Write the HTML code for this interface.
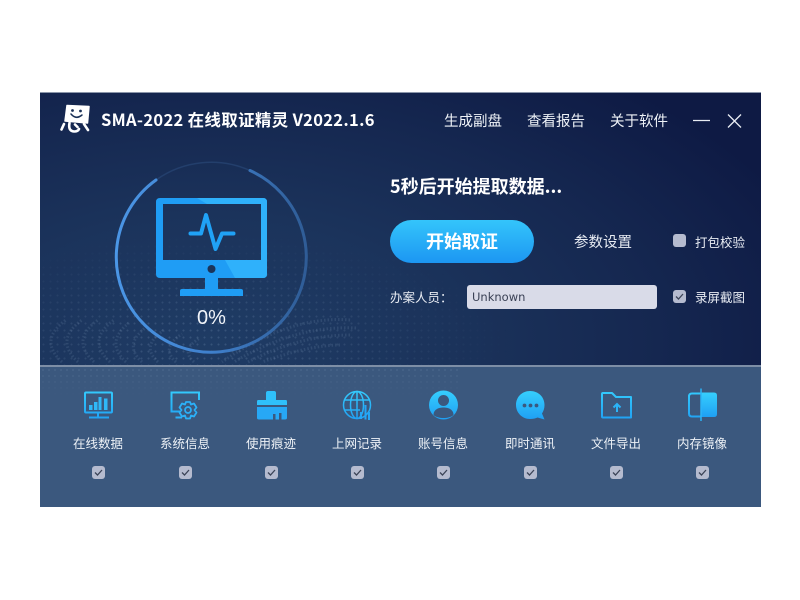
<!DOCTYPE html>
<html><head><meta charset="utf-8">
<style>
html,body{margin:0;padding:0;background:#fff;width:800px;height:600px;overflow:hidden}
body{font-family:"Noto Sans CJK SC","Liberation Sans",sans-serif;position:relative}
#win{position:absolute;left:40px;top:92px;width:721px;height:415px;overflow:hidden;border-top:0}
#line{position:absolute;left:0;top:0;width:721px;height:1px;background:#8b96aa}
#top{position:absolute;left:0;top:1px;width:721px;height:272px;background:radial-gradient(ellipse 640px 340px at 170px 250px,#1f3c65 0%,#1b335b 38%,#152750 70%,#0e1a44 100%)}
#dots{position:absolute;left:0;top:130px;width:480px;height:143px;background-image:radial-gradient(circle,rgba(150,175,205,.2) 0.8px,transparent 1.2px);background-size:7px 7px;-webkit-mask-image:radial-gradient(ellipse 300px 110px at 170px 120px,#000 20%,transparent 100%);mask-image:radial-gradient(ellipse 300px 110px at 170px 120px,#000 20%,transparent 100%)}
#sep{position:absolute;left:0;top:273px;width:721px;height:2px;background:#7d8ea6}
#bot{position:absolute;left:0;top:275px;width:721px;height:140px;background:#3b587e}
#botd{position:absolute;left:0;top:275px;width:420px;height:30px;background-image:radial-gradient(circle,rgba(150,175,205,.13) 0.9px,transparent 1.3px);background-size:6px 6px;-webkit-mask-image:linear-gradient(#000,transparent);mask-image:linear-gradient(#000,transparent)}
.t{position:absolute;white-space:nowrap;color:#fff;line-height:1}
.cb{position:absolute;width:13px;height:13px;border-radius:3px;background:#b5bbcf;box-sizing:border-box}
.cb svg{position:absolute;left:0;top:0}
.lab{position:absolute;width:80px;text-align:center;font-size:12.5px;color:#eef2f7;line-height:1;top:437px}
svg.abs{position:absolute}
#btn{position:absolute;left:390px;top:220px;width:144px;height:43px;border-radius:22px;background:linear-gradient(#34c5fb,#1c96f2);color:#fff;font-size:18px;font-weight:700;text-align:center;line-height:43px}
#inp{position:absolute;left:467px;top:285px;width:190px;height:24px;border-radius:3px;background:#d9dbe8;color:#3a4155;line-height:24px;padding-left:5px;box-sizing:border-box;font-family:"DejaVu Sans","Liberation Sans",sans-serif;font-size:11.5px}
</style></head><body>
<div id="win">
 <div id="line"></div><div id="top"></div><div id="dots"></div>
 <div id="sep"></div><div id="bot"></div><div id="botd"></div>
</div>

<svg class="abs" style="left:0;top:0" width="800" height="600" viewBox="0 0 800 600">
 <defs>
  <linearGradient id="ring" x1="115" y1="0" x2="307" y2="0" gradientUnits="userSpaceOnUse"><stop offset="0" stop-color="#4b96e6"/><stop offset=".5" stop-color="#3f80cc"/><stop offset="1" stop-color="#2f5c96"/></linearGradient>
  <linearGradient id="ic" x1="0" y1="0" x2="0" y2="1"><stop offset="0" stop-color="#36cffe"/><stop offset="1" stop-color="#1f9ff3"/></linearGradient>
  <linearGradient id="ics" gradientUnits="userSpaceOnUse" x1="0" y1="388" x2="0" y2="421"><stop offset="0" stop-color="#36cffe"/><stop offset="1" stop-color="#1f9ff3"/></linearGradient>
  <clipPath id="wv"><rect x="40" y="300" width="400" height="64"/></clipPath>
 </defs>
 <!-- wave bands -->
 <g clip-path="url(#wv)" fill="none" stroke="#8ba6c6" stroke-width="3" stroke-dasharray="1.500 2" opacity=".16">
  <path d="M62 362Q38 340 66 320"/><path d="M78 362Q54 340 82 320"/><path d="M94 362Q70 340 98 320"/><path d="M110 362Q86 340 114 320"/><path d="M126 362Q104 342 130 322"/><path d="M142 362Q122 344 148 326"/><path d="M158 362Q140 346 164 330"/><path d="M176 362Q160 348 182 334"/><path d="M194 362Q180 350 200 338"/>
  <path d="M340 345Q310 345 262 362"/><path d="M350 335Q300 335 248 362"/><path d="M356 328Q296 325 234 362"/><path d="M350 320Q290 315 222 362"/>
 </g>
 <!-- ring -->
 <path d="M250 170.500A95 95 0 0 0 156 180" fill="none" stroke="#233f6c" stroke-width="1.500"/>
 <path d="M156 180A95 95 0 1 0 250 170.500" fill="none" stroke="url(#ring)" stroke-width="3" stroke-linecap="round"/>
 <!-- monitor -->
 <path fill-rule="evenodd" d="M160 198H263Q267 198 267 202V274Q267 278 263 278H160Q156 278 156 274V202Q156 198 160 198ZM163 204V260H261V204Z" fill="#1f9df5"/>
 <path d="M197 198H263Q267 198 267 202V204H207Z" fill="#2fb1fb"/>
 <path d="M225 260H261V204H267V274Q267 278 263 278H235Z" fill="#2fb1fb"/>
 <circle cx="211.500" cy="269" r="4" fill="#1b3459"/>
 <path d="M205 278H218V290H205Z" fill="#1f9df5"/>
 <path d="M182 289H241Q243 289 243 291V296H180V291Q180 289 182 289Z" fill="#1f9df5"/>
 <path d="M190.500 233.500H201L206 215L215.500 249L222 233.500H233.500" fill="none" stroke="#20a2f6" stroke-width="4" stroke-linecap="round" stroke-linejoin="round"/>

 <!-- logo -->
 <path d="M67 105.500L89 106.500L87.500 123L65 121Z" fill="#fff" stroke="#fff" stroke-width="1.500" stroke-linejoin="round"/>
 <circle cx="72.500" cy="110.500" r="1.400" fill="#1a3157"/><circle cx="80.500" cy="111" r="1.400" fill="#1a3157"/>
 <path d="M71 114Q76 120 82 115" fill="none" stroke="#1a3157" stroke-width="1.500" stroke-linecap="round"/>
 <g fill="none" stroke="#fff" stroke-width="2.600" stroke-linecap="round">
  <path d="M64 124L61.500 129.500"/><path d="M69.500 123Q68 131 74 131.500Q78 131.500 79 129"/><path d="M75 124.500L77.500 127"/><path d="M84 124L88 130"/>
 </g>

 <!-- title bar controls -->
 <path d="M693 120.500H710" stroke="#e8ecf3" stroke-width="1.300"/>
 <path d="M728 114.500L741 127.500M741 114.500L728 127.500" stroke="#e8ecf3" stroke-width="1.300"/>

 <!-- 1 online data -->
 <g fill="none" stroke="url(#ics)" stroke-width="2">
  <rect x="85" y="392.500" width="27" height="20" rx="1"/>
  <path d="M98 413V417M89 417.500H109"/>
 </g>
 <path d="M89 405h3.500v5h-3.500zM94 402h3.500v8h-3.500zM98.500 397h3v13h-3zM104 398.500h3.500v11.500h-3.500z" fill="#2fb8f8"/>
 <!-- 2 sys info -->
 <path d="M181 411.500H171.500V392.500H199V400" fill="none" stroke="url(#ics)" stroke-width="2"/>
 <path d="M175.500 417.500H182" stroke="#2bb0f8" stroke-width="2"/>
 <path d="M186 402L190 402L191 404.500L194 403.500L196.500 407.500L194.500 410L196.500 412.500L194 416.500L191 415.500L190 418.500L186 418.500L185 415.500L182 416.500L179.500 412.500L181.500 410L179.500 407.500L182 403.500L185 404.500Z" fill="none" stroke="#2bb0f8" stroke-width="1.800" stroke-linejoin="round"/>
 <circle cx="188" cy="410" r="3" fill="none" stroke="#2bb0f8" stroke-width="1.700"/>
 <!-- 3 broom -->
 <path d="M268 391H274Q276 391 276 393V400H286Q287 400 287 402V405H257V402Q257 400 258 400H266V393Q266 391 268 391Z" fill="#2fc0fb"/>
 <path d="M257 407H287V418Q287 419.500 285 419.500H281.500V413H279V419.500H275.500V414H273V419.500H259Q257 419.500 257 418Z" fill="#27a8f6"/>
 <!-- 4 globe -->
 <g fill="none" stroke="url(#ics)" stroke-width="1.500">
  <circle cx="357" cy="405" r="13.500"/>
  <ellipse cx="357" cy="405" rx="6.500" ry="13.500"/>
  <path d="M357 391.500V418.500M344 400H370M344 410H360"/>
 </g>
 <path d="M361 419V412M365.500 405V419.500M369 412V420" fill="none" stroke="#25a6f6" stroke-width="2"/>
 <!-- 5 account -->
 <circle cx="443.500" cy="405" r="14.500" fill="url(#ic)"/>
 <circle cx="443.500" cy="400.500" r="5.500" fill="#3b587e"/>
 <path d="M433.500 415C433.500 409.500 438.500 407.500 443.500 407.500C448.500 407.500 453.500 409.500 453.500 415C449 419 438 419 433.500 415Z" fill="#3b587e"/>
 <!-- 6 chat -->
 <path d="M530 391C538.500 391 544.500 397 544.500 405C544.500 408.500 543.500 411 542 413.500L544.500 419.500L537.500 417.500C535.500 418.500 533 419 530 419C522 419 516 412.500 516 405C516 397 522 391 530 391Z" fill="url(#ic)"/>
 <circle cx="524.500" cy="405.500" r="1.900" fill="#3b587e"/><circle cx="530.500" cy="405.500" r="1.900" fill="#3b587e"/><circle cx="536.500" cy="405.500" r="1.900" fill="#3b587e"/>
 <!-- 7 folder -->
 <path d="M603 393H612L616 397H631V417.500H603Q602 417.500 602 416.500V394Q602 393 603 393Z" fill="none" stroke="url(#ics)" stroke-width="2" stroke-linejoin="round"/>
 <path d="M617 412V404M613.500 407.500L617 404L620.500 407.500" fill="none" stroke="#2bb4f8" stroke-width="2"/>
 <!-- 8 memory mirror -->
 <path d="M701 393.500H692Q689 393.500 689 396.500V413.500Q689 416.500 692 416.500H701" fill="none" stroke="url(#ics)" stroke-width="2"/>
 <path d="M701 392.500H714Q717 392.500 717 395.500V414Q717 417 714 417H701Z" fill="url(#ic)"/>
 <path d="M701 388.500V421" stroke="#2bb4f8" stroke-width="1.500"/>
</svg>

<div class="t" style="left:101px;top:111px;font-size:16.500px;font-weight:700;letter-spacing:.32px">SMA-2022 在线取证精灵 V2022.1.6</div>
<div class="t" style="left:444px;top:114px;font-size:14.500px;color:#eef2f7">生成副盘</div>
<div class="t" style="left:527px;top:114px;font-size:14.500px;color:#eef2f7">查看报告</div>
<div class="t" style="left:610px;top:114px;font-size:14.500px;color:#eef2f7">关于软件</div>

<div class="t" style="left:197px;top:308px;font-size:20px;font-family:'Liberation Sans',sans-serif;color:#f2f5fa">0%</div>

<div class="t" style="left:390px;top:177px;font-size:18px;font-weight:700">5秒后开始提取数据...</div>
<div id="btn">开始取证</div>
<div class="t" style="left:574px;top:235px;font-size:14.500px;color:#e8ecf3">参数设置</div>
<div class="cb" style="left:673px;top:234px"></div>
<div class="t" style="left:695px;top:235.500px;font-size:12.500px;color:#e8ecf3">打包校验</div>
<div class="t" style="left:390px;top:291px;font-size:12.500px;color:#e8ecf3">办案人员：</div>
<div id="inp">Unknown</div>
<div class="cb" style="left:673px;top:290px"><svg width="13" height="13"><path d="M3 6.500L5.500 9L10 4" fill="none" stroke="#3c4458" stroke-width="1.300"/></svg></div>
<div class="t" style="left:695px;top:291px;font-size:12.500px;color:#e8ecf3">录屏截图</div>

<div class="lab" style="left:58px">在线数据</div>
<div class="lab" style="left:145px">系统信息</div>
<div class="lab" style="left:231px">使用痕迹</div>
<div class="lab" style="left:317px">上网记录</div>
<div class="lab" style="left:403px">账号信息</div>
<div class="lab" style="left:490px">即时通讯</div>
<div class="lab" style="left:576px">文件导出</div>
<div class="lab" style="left:662px">内存镜像</div>

<div class="cb" style="left:92px;top:466px"><svg width="13" height="13"><path d="M3 6.500L5.500 9L10 4" fill="none" stroke="#3c4458" stroke-width="1.300"/></svg></div>
<div class="cb" style="left:179px;top:466px"><svg width="13" height="13"><path d="M3 6.500L5.500 9L10 4" fill="none" stroke="#3c4458" stroke-width="1.300"/></svg></div>
<div class="cb" style="left:265px;top:466px"><svg width="13" height="13"><path d="M3 6.500L5.500 9L10 4" fill="none" stroke="#3c4458" stroke-width="1.300"/></svg></div>
<div class="cb" style="left:351px;top:466px"><svg width="13" height="13"><path d="M3 6.500L5.500 9L10 4" fill="none" stroke="#3c4458" stroke-width="1.300"/></svg></div>
<div class="cb" style="left:437px;top:466px"><svg width="13" height="13"><path d="M3 6.500L5.500 9L10 4" fill="none" stroke="#3c4458" stroke-width="1.300"/></svg></div>
<div class="cb" style="left:524px;top:466px"><svg width="13" height="13"><path d="M3 6.500L5.500 9L10 4" fill="none" stroke="#3c4458" stroke-width="1.300"/></svg></div>
<div class="cb" style="left:610px;top:466px"><svg width="13" height="13"><path d="M3 6.500L5.500 9L10 4" fill="none" stroke="#3c4458" stroke-width="1.300"/></svg></div>
<div class="cb" style="left:696px;top:466px"><svg width="13" height="13"><path d="M3 6.500L5.500 9L10 4" fill="none" stroke="#3c4458" stroke-width="1.300"/></svg></div>
</body></html>
